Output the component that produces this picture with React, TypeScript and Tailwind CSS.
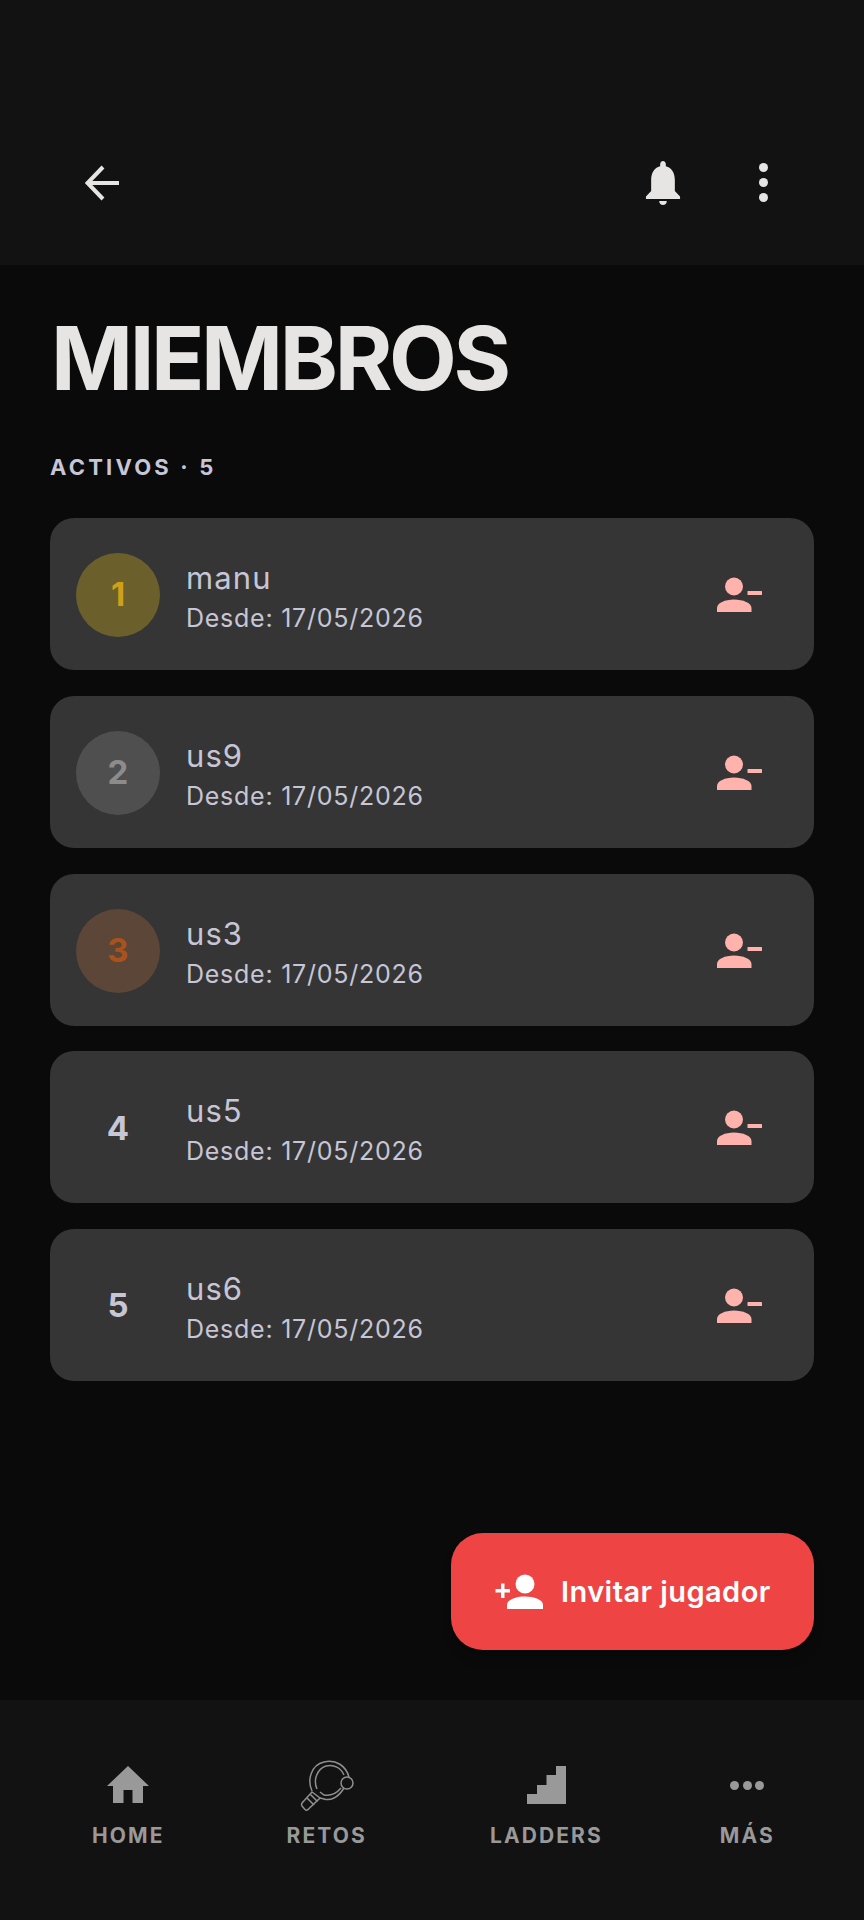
const font = { fontFamily: 'Inter, "Noto Sans", sans-serif' };

const members = [
  { rank: 1, name: "manu", circle: "bg-[#6b5f2c]", text: "text-[#d09f1a]" },
  { rank: 2, name: "us9", circle: "bg-[#4f4f4f]", text: "text-[#8c8c8c]" },
  { rank: 3, name: "us3", circle: "bg-[#5c4638]", text: "text-[#a9531a]" },
  { rank: 4, name: "us5", circle: "", text: "text-[#c6c6d6]" },
  { rank: 5, name: "us6", circle: "", text: "text-[#c6c6d6]" },
];

function PersonMinus() {
  return (
    <svg width="50" height="40" viewBox="0 0 50 40" fill="#ffb3ac">
      <circle cx="19" cy="11.5" r="9" />
      <path d="M2 37v-4c0-5 8-8.500 17-8.500s17.500 3.500 17.500 8.500v4z" />
      <rect x="32.500" y="16" width="14.500" height="4" rx="0.5" />
    </svg>
  );
}

function Member({ rank, name, circle, text }: (typeof members)[number]) {
  return (
    <div className="flex h-[152px] items-center rounded-[24px] bg-[#353535] pl-[26px] pr-[49px] pt-[2px]">
      <div className={`flex h-[84px] w-[84px] shrink-0 items-center justify-center rounded-full text-[33px] font-bold ${circle} ${text}`}>
        {rank}
      </div>
      <div className="ml-[26px] flex flex-1 flex-col text-[#c6c6d6]">
        <span className="mt-[3px] text-[31px] leading-[40px] tracking-[0.035em]">{name}</span>
        <span className="mt-[3px] text-[25px] leading-[34px] tracking-[0.03em]">Desde: 17/05/2026</span>
      </div>
      <PersonMinus />
    </div>
  );
}

function NavItem({ label, className, children }: { label: string; className: string; children: React.ReactNode }) {
  return (
    <div className={`flex flex-col items-center ${className}`}>
      <div className="flex h-[60px] items-center justify-center">{children}</div>
      <span className="mt-[7px] text-[21px] font-bold leading-[28px] tracking-[0.1em] text-[#999999]">{label}</span>
    </div>
  );
}

export default function App() {
  return (
    <div style={font} className="flex h-[1920px] w-[864px] flex-col overflow-hidden bg-[#0a0a0a]">
      <header className="flex h-[265px] shrink-0 items-center justify-between bg-[#121212] pl-[85px] pr-[96px] pt-[100px]">
        <svg width="34" height="36" viewBox="0 0 34 36" fill="none" stroke="#e7e5e4" strokeWidth="4">
          <path d="M34 18H3M18 2 2.500 18 18 34" />
        </svg>
        <div className="flex items-center gap-[78px]">
          <svg width="36" height="44" viewBox="0 0 38 44" preserveAspectRatio="none" fill="#e7e5e4">
            <path d="M19 0c1.700 0 3 1.300 3 3.200v2c6.500 1.500 9.500 7 9.500 13.800v11l5.500 5.500V38H1v-2.500L6.500 30V19c0-6.800 3-12.300 9.500-13.800v-2C16 1.300 17.300 0 19 0z" />
            <path d="M15 40h8c0 2.500-1.800 4-4 4s-4-1.500-4-4z" />
          </svg>
          <div className="flex flex-col gap-[6px]">
            <span className="h-[9px] w-[9px] rounded-full bg-[#e7e5e4]" />
            <span className="h-[9px] w-[9px] rounded-full bg-[#e7e5e4]" />
            <span className="h-[9px] w-[9px] rounded-full bg-[#e7e5e4]" />
          </div>
        </div>
      </header>

      <main className="flex flex-1 flex-col px-[50px]">
        <h1 className="ml-[1px] mt-[43px] text-[88px] font-bold leading-[100px] tracking-[-0.038em] text-[#e7e5e4]">MIEMBROS</h1>
        <p className="mt-[43px] text-[22px] font-bold leading-[32px] tracking-[0.145em] text-[#c6c6d6]">ACTIVOS · 5</p>
        <div className="mt-[35px] flex flex-col gap-[25.800px]">
          {members.map((m) => (
            <Member key={m.rank} {...m} />
          ))}
        </div>
        <button className="mb-[50px] mt-auto flex h-[117px] w-[363px] items-center self-end rounded-[32px] bg-[#ef4444] pl-[44px] text-white shadow-lg">
          <svg width="50" height="36" viewBox="0 0 50 36" fill="#fff">
            <circle cx="30" cy="10" r="9.500" />
            <path d="M12 35v-4c0-5.500 9-8.500 18-8.500s18 3 18 8.500v4z" />
            <path d="M6 9.500h3.500V15H15v3.500H9.500V24H6v-5.500H.5V15H6z" />
          </svg>
          <span className="ml-[16px] text-[29px] font-semibold tracking-[0.015em]">Invitar jugador</span>
        </button>
      </main>

      <nav className="flex h-[220px] shrink-0 items-start bg-[#121212] pl-[92px] pt-[55px]">
        <NavItem label="HOME" className="">
          <svg width="42" height="38" viewBox="0 0 42 38" fill="#999999">
            <path fillRule="evenodd" d="M21 0 42 20h-6v17H6V20H0zM16.500 24v13h9V24z" />
          </svg>
        </NavItem>
        <NavItem label="RETOS" className="ml-[122px]">
          <svg width="54" height="51" viewBox="0 0 54 51" fill="none" stroke="#8f8f8f" strokeWidth="1.500">
            <path d="M12 31C7 20 11 5 24 2c12-3 22 4 25 15" />
            <path d="M44 28c-6 10-14 13-20 11l-4-1" />
            <path d="M17 29c-4-9 0-20 9-23 8-2 15 2 18 9" />
            <path d="M41 28c-5 6-11 8-17 7l-4-3" />
            <circle cx="47" cy="23" r="6" fill="#121212" />
            <path d="M12 32 2 43c-.700 1-.700 2 0 3l3 3.500c1 1 2 1 3 0L20 38z" />
            <path d="M7 38l7 7M10.500 34.500l7 7" />
          </svg>
        </NavItem>
        <NavItem label="LADDERS" className="ml-[123px]">
          <svg width="40" height="40" viewBox="0 0 40 40" fill="#999999">
            <path d="M30 1h10v38H1v-10h10v-9h9.500v-10H30z" />
          </svg>
        </NavItem>
        <NavItem label="MÁS" className="ml-[117px]">
          <div className="flex gap-[3.500px]">
            <span className="h-[9px] w-[9px] rounded-full bg-[#999999]" />
            <span className="h-[9px] w-[9px] rounded-full bg-[#999999]" />
            <span className="h-[9px] w-[9px] rounded-full bg-[#999999]" />
          </div>
        </NavItem>
      </nav>
    </div>
  );
}
